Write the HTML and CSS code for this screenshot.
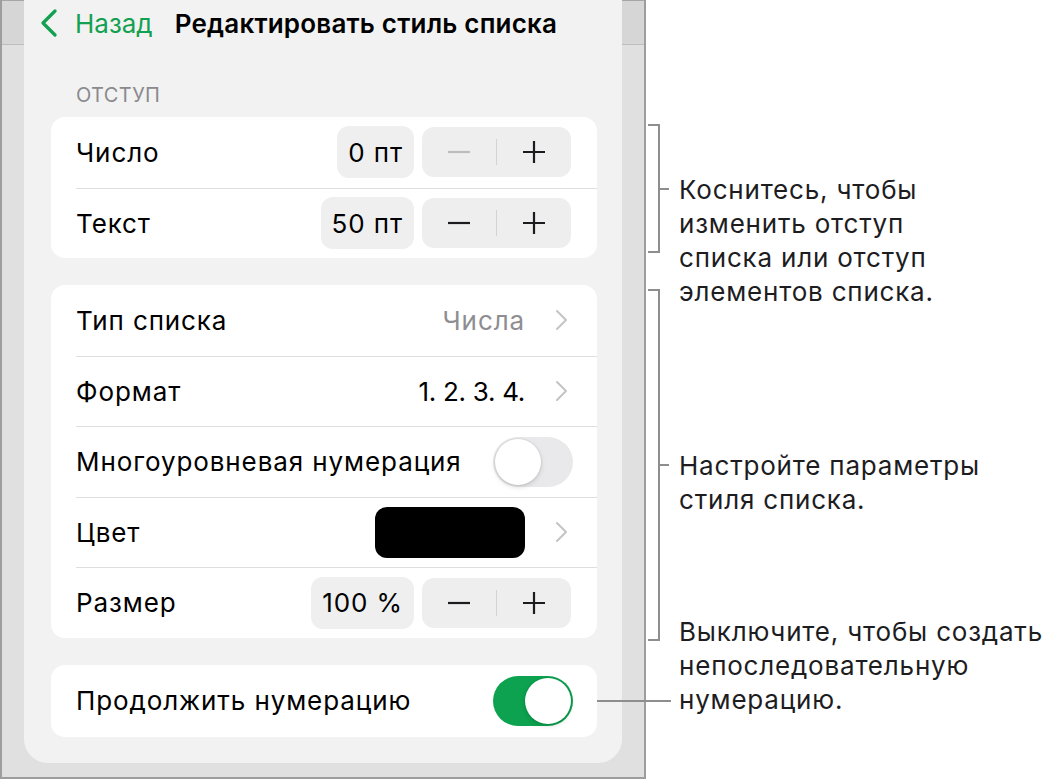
FILE: index.html
```html
<!DOCTYPE html>
<html lang="ru">
<head>
  <meta charset="UTF-8" />
  <meta name="viewport" content="width=device-width, initial-scale=1.0" />
  <title>Редактировать стиль списка</title>
  <link rel="stylesheet" href="styles.css">
</head>
<body>
  <div class="page">
    <div class="device">
      <div class="gutter"><div class="gutter-top"></div></div>

      <div class="panel">
        <div class="nav">
          <a class="back" href="#">
            <svg class="back-icon" width="18" height="28" viewBox="0 0 18 28">
              <path d="M15 2 L3 14 L15 26" />
            </svg>
            <span>Назад</span>
          </a>
          <h1 class="title">Редактировать стиль списка</h1>
        </div>

        <div class="section-label">Отступ</div>
        <div class="card">
          <div class="row">
            <span class="row-label">Число</span>
            <span class="value">0 пт</span>
            <div class="stepper">
              <button class="step disabled">
                <svg width="24" height="24" viewBox="0 0 24 24"><path d="M1 12 H23" /></svg>
              </button>
              <span class="step-divider"></span>
              <button class="step">
                <svg width="24" height="24" viewBox="0 0 24 24"><path d="M1 12 H23 M12 1 V23" /></svg>
              </button>
            </div>
          </div>
          <div class="row">
            <span class="row-label">Текст</span>
            <span class="value">50 пт</span>
            <div class="stepper">
              <button class="step">
                <svg width="24" height="24" viewBox="0 0 24 24"><path d="M1 12 H23" /></svg>
              </button>
              <span class="step-divider"></span>
              <button class="step">
                <svg width="24" height="24" viewBox="0 0 24 24"><path d="M1 12 H23 M12 1 V23" /></svg>
              </button>
            </div>
          </div>
        </div>

        <div class="card">
          <div class="row">
            <span class="row-label">Тип списка</span>
            <span class="detail muted">Числа</span>
            <svg class="chevron" width="14" height="22" viewBox="0 0 14 22"><path d="M2 2 L11 11 L2 20" /></svg>
          </div>
          <div class="row">
            <span class="row-label">Формат</span>
            <span class="detail digits">1. 2. 3. 4.</span>
            <svg class="chevron" width="14" height="22" viewBox="0 0 14 22"><path d="M2 2 L11 11 L2 20" /></svg>
          </div>
          <div class="row">
            <span class="row-label">Многоуровневая нумерация</span>
            <span class="toggle"><span class="knob"></span></span>
          </div>
          <div class="row">
            <span class="row-label">Цвет</span>
            <span class="swatch"></span>
            <svg class="chevron" width="14" height="22" viewBox="0 0 14 22"><path d="M2 2 L11 11 L2 20" /></svg>
          </div>
          <div class="row">
            <span class="row-label">Размер</span>
            <span class="value">100 %</span>
            <div class="stepper">
              <button class="step">
                <svg width="24" height="24" viewBox="0 0 24 24"><path d="M1 12 H23" /></svg>
              </button>
              <span class="step-divider"></span>
              <button class="step">
                <svg width="24" height="24" viewBox="0 0 24 24"><path d="M1 12 H23 M12 1 V23" /></svg>
              </button>
            </div>
          </div>
        </div>

        <div class="card card-continue">
          <div class="row row-single">
            <span class="row-label">Продолжить нумерацию</span>
            <span class="toggle on"><span class="knob"></span></span>
          </div>
        </div>
      </div>

      <div class="gutter"><div class="gutter-top"></div></div>
    </div>

    <div class="notes">
      <div class="note note-indent">
        <div class="bracket"></div>
        <p class="note-text">Коснитесь, чтобы<br>изменить отступ<br>списка или отступ<br>элементов списка.</p>
      </div>
      <div class="note note-style">
        <div class="bracket"></div>
        <p class="note-text">Настройте параметры<br>стиля списка.</p>
      </div>
      <div class="note note-continue">
        <p class="note-text">Выключите, чтобы создать<br>непоследовательную<br>нумерацию.</p>
      </div>
    </div>
  </div>
</body>
</html>
```

FILE: styles.css
```css
* {
  box-sizing: border-box;
  margin: 0;
  padding: 0;
}

body {
  font-family: Inter, "Noto Sans", sans-serif;
  background: #fff;
  color: #000;
}

.page {
  display: flex;
  align-items: flex-start;
}

/* device frame */

.device {
  width: 646px;
  height: 779px;
  flex: none;
  display: flex;
  background: #e0e0e0;
  border: 2px solid #9d9d9d;
  border-top: none;
}

.gutter {
  width: 22px;
  flex: none;
}

.gutter-top {
  height: 45px;
  background: #d6d6d6;
  border-top: 1px solid #a6a6a6;
  border-bottom: 1px solid #bdbdbd;
}

.panel {
  width: 598px;
  height: 763px;
  flex: none;
  background: #f2f2f2;
  border-radius: 0 0 24px 24px;
  padding: 0 25px 0 27px;
}

/* nav bar */

.nav {
  height: 46px;
  display: flex;
  align-items: center;
  margin-left: -11px;
}

.back {
  display: flex;
  align-items: center;
  color: #12a150;
  text-decoration: none;
  font-size: 26px;
}

.back-icon path {
  fill: none;
  stroke: #12a150;
  stroke-width: 3.2;
  stroke-linecap: round;
  stroke-linejoin: round;
}

.back span {
  margin-left: 17px;
}

.title {
  margin-left: 22px;
  font-size: 26px;
  font-weight: 600;
  letter-spacing: 0.2px;
}

.section-label {
  margin: 39px 0 12px 25px;
  font-size: 20px;
  line-height: 20px;
  letter-spacing: 0.4px;
  color: #8a8a8e;
  text-transform: uppercase;
}

/* grouped cards */

.card {
  background: #fff;
  border-radius: 14px;
  padding-left: 25px;
}

.card + .card {
  margin-top: 27px;
}

.row {
  height: 70.5px;
  display: flex;
  align-items: center;
  padding-right: 26px;
  font-size: 26px;
  letter-spacing: 0.9px;
}

.row + .row {
  border-top: 1px solid #dedede;
}

.row-single {
  height: 72px;
}

.row-label {
  flex: 1;
}

.value {
  height: 52px;
  padding: 0 11px;
  display: flex;
  align-items: center;
  background: #efeff0;
  border-radius: 12px;
}

.stepper {
  width: 149px;
  height: 50px;
  margin-left: 8px;
  display: flex;
  align-items: center;
  background: #eeeeef;
  border-radius: 12px;
}

.step {
  flex: 1;
  height: 100%;
  display: flex;
  align-items: center;
  justify-content: center;
  border: none;
  background: none;
}

.step path {
  fill: none;
  stroke: #1c1c1e;
  stroke-width: 2.2;
}

.step.disabled path {
  stroke: #bdbdbf;
}

.step-divider {
  width: 1px;
  height: 26px;
  background: #d3d3d5;
}

.muted {
  color: #8e8e92;
}

.digits {
  letter-spacing: -0.3px;
}

.chevron {
  margin-left: 30px;
  margin-right: 2px;
}

.chevron path {
  fill: none;
  stroke: #c4c4c7;
  stroke-width: 2;
  stroke-linecap: round;
  stroke-linejoin: round;
}

.swatch {
  width: 150px;
  height: 51px;
  background: #000;
  border-radius: 12px;
}

/* switches */

.toggle {
  width: 80px;
  height: 50px;
  padding: 2px;
  display: flex;
  background: #e9e9eb;
  border-radius: 25px;
  margin-right: -2px;
}

.knob {
  width: 46px;
  height: 46px;
  background: #fff;
  border-radius: 50%;
  box-shadow: 0 2px 5px rgba(0,0,0,0.15), 0 0 0 1px rgba(0,0,0,0.04);
}

.toggle.on {
  background: #0ca24f;
  justify-content: flex-end;
}

.card-continue {
  position: relative;
}

.card-continue::after {
  content: "";
  position: absolute;
  left: 100%;
  top: 35px;
  width: 74px;
  height: 2px;
  background: #8e8e8e;
}

/* callouts */

.notes {
  margin-left: 2px;
  padding-top: 124px;
  display: flex;
  flex-direction: column;
}

.note {
  display: flex;
  align-items: flex-start;
}

.bracket {
  width: 12px;
  height: 100%;
  position: relative;
  border: 2px solid #8e8e8e;
  border-left: none;
}

.bracket::after {
  content: "";
  position: absolute;
  left: 100%;
  top: calc(50% - 1px);
  width: 11px;
  height: 2px;
  background: #8e8e8e;
}

.note-text {
  margin-left: 19px;
  font-size: 26px;
  line-height: 34px;
  letter-spacing: 0.8px;
  color: #1d1d1f;
  white-space: nowrap;
}

.note-indent {
  height: 129px;
}

.note-indent .note-text {
  margin-top: 49px;
}

.note-style {
  height: 352px;
  margin-top: 36px;
}

.note-style .note-text {
  margin-top: 160px;
}

.note-continue {
  margin-top: -26px;
  padding-left: 12px;
}
```
